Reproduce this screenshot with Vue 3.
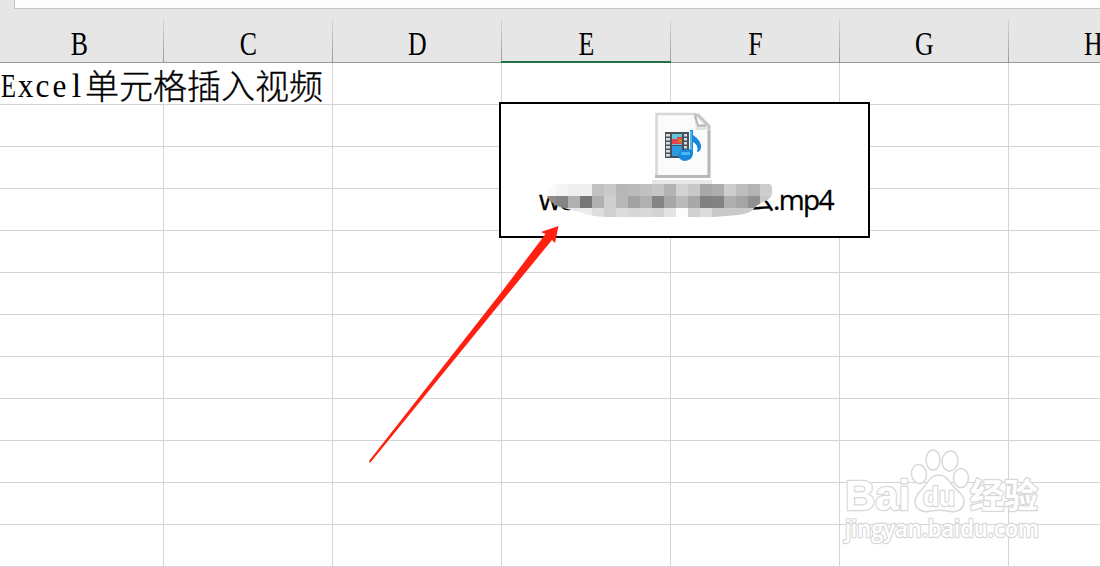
<template>
  <div class="sheet">
    <div class="formula-bar">
      <div class="formula-input"></div>
    </div>

    <div class="header-row">
      <div
        v-for="col in columns"
        :key="col"
        class="col-header"
        :class="{ active: col === 'E' }"
      >
        <span class="col-name">{{ col }}</span>
      </div>
    </div>

    <div class="grid">
      <div v-for="row in 12" :key="row" class="row">
        <div v-for="col in columns" :key="col" class="cell">
          <span v-if="row === 1 && col === 'B'" class="cell-text">
            <span class="latin"><span v-for="(ch, i) in 'Excel'" :key="i" class="ch" :class="{ cap: i === 0, ell: ch === 'l' }">{{ ch }}</span></span><span class="cjk">单元格插入视频</span>
          </span>
        </div>
      </div>
    </div>

    <!-- Objeto incrustado -->
    <div class="object">
      <svg class="file-icon" width="60" height="70" viewBox="0 0 60 70">
        <path d="M2 1H42L58 17V66H2Z" fill="#fbfbfb" />
        <path d="M3.5 66V2H41" fill="none" stroke="#d6d6d6" stroke-width="2.5" />
        <path d="M2 64.5H56V18" fill="none" stroke="#b8b8b8" stroke-width="3" />
        <path d="M41 1H46L58 14V18H43Z" fill="#e2e2e2" />
        <path d="M41 2L46 4L56 14V17" fill="none" stroke="#c0c0c0" stroke-width="2" />
        <path d="M43 5L51 13H43Z" fill="#fff" />
        <path d="M42 4L45 13.5H53" fill="none" stroke="#b4b4b4" stroke-width="2" />
        <rect x="12" y="20" width="24" height="26" fill="#4a5058" />
        <rect x="19" y="22" width="10" height="11" fill="#63c4de" />
        <path d="M19 27H24V25H29V32H19Z" fill="#e9404e" />
        <path d="M25 27H29V31H25Z" fill="#c77c32" />
        <rect x="19" y="34" width="10" height="10" fill="#2d9be2" />
        <g fill="#d8dce0">
          <template v-for="n in 6" :key="n">
            <rect x="13" :y="18 + n * 4" width="4" height="2.5" />
            <rect x="31" :y="18 + n * 4" width="3" height="2.5" />
          </template>
        </g>
        <path d="M37 18H40V23Q49 29 48 36Q47 40 44 40Q46 33 40 30V42Q39 49 31 49Q25 47 25 43Q26 37 37 37Z" fill="#1689da" />
        <path d="M37 19H39V38H37ZM28 40H37V43H28Z" fill="#49b5f1" />
      </svg>
      <div class="file-name">
        <span class="name-start">we</span>
        <span class="name-end">么.mp4</span>
      </div>
    </div>

    <svg class="mosaic" width="250" height="40" viewBox="540 180 250 40">
      <defs>
        <clipPath id="smudge">
          <path d="M557 184H770Q773 186 772 194Q770 200 763 202Q756 205 753 210Q748 214 738 215L714 217H606Q590 216 583 213L560 207Q549 203 547 195Q549 185 557 184Z" />
        </clipPath>
      </defs>
      <rect x="652" y="179" width="60" height="5" fill="#e8e8e8" />
      <g clip-path="url(#smudge)" shape-rendering="crispEdges">
        <template v-for="(line, r) in tones" :key="r">
          <rect
            v-for="(tone, c) in line"
            :key="c"
            :x="544 + c * 12"
            :y="184 + r * 12"
            width="12"
            height="12"
            :fill="`rgb(${tone},${tone},${tone})`"
          />
        </template>
      </g>
    </svg>

    <svg class="arrow" width="200" height="245" viewBox="365 222 200 245">
      <path d="M558.5 226L555 243L552 240L507 295L370 463L369 461L500 294L545.5 234L541 232Z" fill="#ff2012" />
    </svg>

    <svg class="watermark" width="210" height="110" viewBox="838 443 210 110">
      <g class="wm-shapes">
        <text class="wm-bold" x="845" y="510" font-size="43" textLength="65" lengthAdjust="spacingAndGlyphs">Bai</text>
        <ellipse cx="919" cy="474" rx="7.5" ry="9.5" transform="rotate(-8 919 474)" />
        <ellipse cx="933" cy="460" rx="7" ry="10" />
        <ellipse cx="950" cy="461" rx="8" ry="10" transform="rotate(8 950 461)" />
        <ellipse cx="961" cy="478" rx="7.5" ry="9.5" />
        <path d="M939 475C946 475 949 481 953 486C958 492 965 495 964 503C962 513 952 512 947 511C941 510 936 510 931 511C924 513 915 510 915 502C915 493 923 490 926 484C930 479 932 475 939 475Z" />
        <text class="wm-du" x="923" y="506" font-size="28" textLength="32" lengthAdjust="spacingAndGlyphs">du</text>
        <text class="wm-cjk" x="970" y="508" font-size="34">经验</text>
        <text class="wm-url" x="845" y="537" font-size="24" textLength="194" lengthAdjust="spacingAndGlyphs">jingyan.baidu.com</text>
      </g>
    </svg>
  </div>
</template>

<script setup>
const columns = ['B', 'C', 'D', 'E', 'F', 'G', 'H']

// Tonos de gris del difuminado, por filas
const tones = [
  [250, 244, 239, 239, 194, 202, 183, 187, 192, 198, 179, 210, 200, 168, 173, 205, 190, 180, 205],
  [140, 133, 176, 119, 176, 207, 184, 162, 176, 132, 167, 187, 168, 128, 130, 174, 165, 145, 200],
  [228, 228, 232, 236, 222, 208, 220, 215, 216, 211, 228, 252, 208, 220, 202, 201, 202, 205, 225]
]
</script>

<style>
body {
  margin: 0;
  overflow: hidden;
}
</style>

<style scoped>
.sheet {
  position: relative;
  width: 1100px;
  height: 567px;
  overflow: hidden;
  background: #fff;
  color: #000;
}

.formula-bar {
  height: 19px;
  padding-left: 14px;
  background: #e6e6e6;
}

.formula-input {
  box-sizing: border-box;
  height: 9px;
  background: #fdfdfd;
  border-left: 1px solid #c6c6c6;
  border-bottom: 1px solid #c6c6c6;
}

.header-row,
.row {
  display: flex;
  width: 1183px;
  margin-left: -5px;
}

.header-row {
  height: 44px;
  background: linear-gradient(#999, #999) bottom / 100% 1px no-repeat #e6e6e6;
}

.col-header {
  position: relative;
  box-sizing: border-box;
  flex: 0 0 169px;
  height: 44px;
  text-align: center;
  background: linear-gradient(#d8d8d8, #999) right top / 1px 100% no-repeat;
}

.col-header.active::after {
  content: '';
  position: absolute;
  left: -1px;
  right: 0;
  bottom: 0;
  height: 2px;
  background: #217346;
}

.col-name {
  display: inline-block;
  font: 34px/50px 'Liberation Serif', serif;
  transform: scaleX(0.76);
}

.cell {
  box-sizing: border-box;
  flex: 0 0 169px;
  width: 169px;
  min-width: 0;
  height: 42px;
  border-right: 1px solid #d4d4d4;
  border-bottom: 1px solid #d4d4d4;
}

/* el texto tapa la línea de la celda vecina */
.cell-text {
  position: relative;
  display: flex;
  width: 330px;
  height: 41px;
  padding-left: 5px;
  background: #fff;
  font-size: 34px;
  line-height: 46px;
  white-space: nowrap;
}

.latin {
  display: flex;
  font-family: 'Liberation Serif', serif;
}

.ch {
  display: flex;
  justify-content: center;
  width: 17px;
  transform: scaleX(0.92);
}

.ch.cap {
  transform: scaleX(0.72);
}

.ch.ell {
  transform: none;
}

.cjk {
  font-family: 'Noto Sans CJK SC', sans-serif;
  font-weight: 300;
  line-height: 44px;
  -webkit-text-stroke: 0.35px #000;
}

.object {
  position: absolute;
  left: 499px;
  top: 102px;
  box-sizing: border-box;
  width: 371px;
  height: 136px;
  border: 2px solid #000;
  background: #fff;
}

.file-icon {
  display: block;
  margin: 8px 0 0 152px;
}

.file-name {
  display: flex;
  justify-content: space-between;
  padding: 0 35px 0 38px;
  font: 28px/34px 'Open Sans', 'Noto Sans CJK SC', sans-serif;
  letter-spacing: -1.6px;
  -webkit-text-stroke: 0.3px #000;
}

.mosaic {
  position: absolute;
  left: 540px;
  top: 180px;
}

.arrow {
  position: absolute;
  left: 365px;
  top: 222px;
}

.watermark {
  position: absolute;
  left: 838px;
  top: 443px;
}

.wm-shapes {
  fill: #fff;
  stroke: #d8d8d8;
  stroke-width: 1.5px;
  stroke-linejoin: round;
}

.wm-shapes text {
  paint-order: stroke;
  stroke-width: 2.5px;
}

.wm-bold {
  font-family: 'Liberation Sans', sans-serif;
  font-weight: 700;
}

.wm-du {
  font-family: 'Liberation Sans', sans-serif;
  font-weight: 700;
}

.wm-cjk {
  font-family: 'Noto Sans CJK SC', sans-serif;
  font-weight: 700;
}

.wm-url {
  font-family: 'Open Sans', sans-serif;
  font-weight: 600;
}
</style>
